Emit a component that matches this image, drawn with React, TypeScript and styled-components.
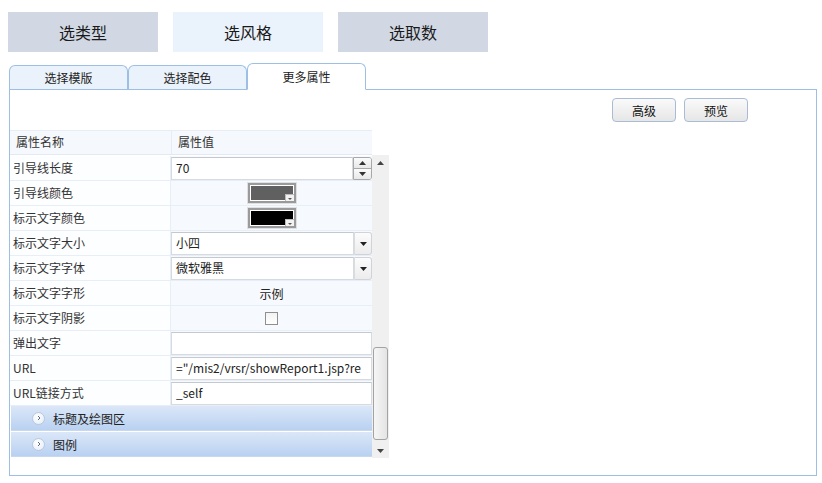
import styled, { createGlobalStyle } from 'styled-components';

const GlobalStyle = createGlobalStyle`
  body {
    margin: 0;
    background: #ffffff;
    font-family: "Noto Sans CJK SC", "Noto Sans", sans-serif;
    color: #222;
  }
`;

const Page = styled.div`
  width: 822px;
  height: 483px;
  overflow: hidden;
`;

const StepBar = styled.div`
  display: flex;
  gap: 15px;
  padding: 12px 8px 0;
`;

const StepButton = styled.div<{ active?: boolean }>`
  width: 150px;
  height: 40px;
  display: flex;
  align-items: center;
  justify-content: center;
  font-size: 16px;
  color: #1a1a1a;
  background: ${p => (p.active ? '#eaf2fb' : '#d1d8e4')};
`;

const TabStrip = styled.div`
  display: flex;
  align-items: flex-end;
  margin: 12px 0 0 9px;
  height: 25px;
`;

const Tab = styled.div<{ active?: boolean }>`
  width: 117px;
  height: ${p => (p.active ? '25px' : '23px')};
  display: flex;
  align-items: center;
  justify-content: center;
  font-size: 12px;
  color: #222;
  border: 1px solid #9dbfe6;
  border-bottom: ${p => (p.active ? '1px solid #fff' : 'none')};
  border-radius: 6px 6px 0 0;
  background: ${p => (p.active ? '#ffffff' : '#eaf2fb')};
  margin-bottom: ${p => (p.active ? '-1px' : '0')};
  position: relative;
  z-index: ${p => (p.active ? 2 : 1)};
`;

const Panel = styled.div`
  margin-left: 9px;
  width: 806px;
  height: 385px;
  border: 1px solid #9dbfe6;
  position: relative;
`;

const ActionRow = styled.div`
  display: flex;
  justify-content: flex-end;
  gap: 8px;
  padding: 8px 68px 0 0;
  height: 24px;
`;

const ActionButton = styled.div`
  width: 62px;
  height: 22px;
  border: 1px solid #a9bcd4;
  border-radius: 4px;
  background: linear-gradient(#fafafa, #e6e6e6);
  display: flex;
  align-items: center;
  justify-content: center;
  font-size: 12px;
  color: #111;
`;

const Grid = styled.div`
  margin-top: 8px;
  width: 379px;
`;

const HeaderRow = styled.div`
  display: grid;
  grid-template-columns: 161px 201px;
  height: 25px;
  background: #f5f8fc;
  border-top: 1px solid #e6edf6;
  border-bottom: 1px solid #e2e9f3;
  box-sizing: border-box;
  width: 362px;
`;

const HeaderCell = styled.div`
  display: flex;
  align-items: center;
  padding: 0 0 2px 6px;
  font-size: 12px;
  color: #333;
  & + & {
    border-left: 1px solid #e6edf6;
  }
`;

const Body = styled.div`
  display: flex;
  height: 303px;
`;

const Rows = styled.div`
  width: 362px;
  padding-top: 1px;
`;

const Row = styled.div`
  display: grid;
  grid-template-columns: 161px 201px;
  height: 25px;
  box-sizing: border-box;
  border-bottom: 1px solid #e8eef6;
`;

const NameCell = styled.div`
  display: flex;
  align-items: center;
  padding: 0 0 2px 3px;
  font-size: 12px;
  color: #333;
  background: #fdfeff;
  border-right: 1px solid #e8eef6;
`;

const ValueCell = styled.div<{ center?: boolean }>`
  display: flex;
  align-items: center;
  justify-content: ${p => (p.center ? 'center' : 'flex-start')};
  background: #f6f9fd;
  font-size: 12px;
  color: #222;
  position: relative;
`;

const TextField = styled.div`
  flex: 1;
  align-self: stretch;
  margin-top: 1px;
  background: #fff;
  border: 1px solid #d6dbe2;
  border-top-color: #c4c9d0;
  display: flex;
  align-items: center;
  padding: 0 0 2px 4px;
  font-size: 12px;
  color: #222;
  white-space: nowrap;
  overflow: hidden;
`;

const Spinner = styled.div`
  width: 17px;
  align-self: stretch;
  margin-top: 1px;
  display: flex;
  flex-direction: column;
  border: 1px solid #a8a8a8;
  border-radius: 0 3px 3px 0;
  overflow: hidden;
`;

const SpinPart = styled.div`
  flex: 1;
  display: flex;
  align-items: center;
  justify-content: center;
  background: linear-gradient(#fbfbfb, #e8e8e8);
  & + & {
    border-top: 1px solid #a8a8a8;
  }
`;

const DropButton = styled.div`
  width: 16px;
  align-self: stretch;
  margin-top: 1px;
  display: flex;
  align-items: center;
  justify-content: center;
  border: 1px solid #d0d4da;
  border-left: 1px solid #dcdcdc;
  border-radius: 0 3px 3px 0;
  background: linear-gradient(#fcfcfc, #ececec);
`;

const Swatch = styled.div<{ color: string }>`
  width: 44px;
  height: 16px;
  border: 2px solid #9a9a9a;
  outline: 1px solid #e0e0e0;
  box-shadow: inset 0 0 0 1px #fff;
  background: ${p => p.color};
  position: relative;
  &::after {
    content: '';
    position: absolute;
    right: 0;
    bottom: 0;
    width: 8px;
    height: 6px;
    background: #f2f2f2;
    border-top: 1px solid #bbb;
    border-left: 1px solid #bbb;
  }
  &::before {
    content: '';
    position: absolute;
    right: 2px;
    bottom: 1px;
    border-left: 2px solid transparent;
    border-right: 2px solid transparent;
    border-top: 2px solid #555;
    z-index: 1;
  }
`;

const CheckBox = styled.div`
  width: 11px;
  height: 11px;
  border: 1px solid #8f8f8f;
  background: linear-gradient(#f3f3f3, #ffffff);
`;

const Section = styled.div`
  height: 24px;
  margin: 0 0 1px 1px;
  display: flex;
  align-items: center;
  gap: 8px;
  padding-left: 21px;
  font-size: 12px;
  color: #222;
  background: linear-gradient(#dbe7f8, #b9d1f1);
  border-bottom: 1px solid #c8d9ef;
`;

const Bullet = styled.div`
  width: 11px;
  height: 11px;
  border-radius: 50%;
  background: radial-gradient(circle at 40% 35%, #ffffff, #e4ecf6);
  border: 1px solid #b8c8de;
  display: flex;
  align-items: center;
  justify-content: center;
`;

const ScrollBar = styled.div`
  width: 17px;
  background: #f0f0f0;
  display: flex;
  flex-direction: column;
  align-items: center;
`;

const ScrollArrow = styled.div`
  height: 15px;
  width: 17px;
  display: flex;
  align-items: center;
  justify-content: center;
`;

const ScrollTrack = styled.div`
  flex: 1;
  width: 100%;
  display: flex;
  flex-direction: column;
  justify-content: flex-end;
  padding-bottom: 3px;
`;

const ScrollThumb = styled.div`
  margin: 0 1px;
  height: 91px;
  border: 1px solid #a3a3a3;
  border-radius: 3px;
  background: linear-gradient(90deg, #f6f6f6, #e4e4e4);
`;

const Tri = ({ up, color = '#333' }: { up?: boolean; color?: string }) => (
  <svg width="7" height="4" viewBox="0 0 7 4">
    <path d={up ? 'M0 4 L3.5 0 L7 4 Z' : 'M0 0 L7 0 L3.5 4 Z'} fill={color} />
  </svg>
);

const Chevron = () => (
  <svg width="4" height="6" viewBox="0 0 4 6">
    <path d="M1 1 L3 3 L1 5" stroke="#5a6b86" strokeWidth="1" fill="none" />
  </svg>
);

export default function App() {
  return (
    <Page>
      <GlobalStyle />
      <StepBar>
        <StepButton>选类型</StepButton>
        <StepButton active>选风格</StepButton>
        <StepButton>选取数</StepButton>
      </StepBar>
      <TabStrip>
        <Tab>选择模版</Tab>
        <Tab>选择配色</Tab>
        <Tab active>更多属性</Tab>
      </TabStrip>
      <Panel>
        <ActionRow>
          <ActionButton>高级</ActionButton>
          <ActionButton>预览</ActionButton>
        </ActionRow>
        <Grid>
          <HeaderRow>
            <HeaderCell>属性名称</HeaderCell>
            <HeaderCell>属性值</HeaderCell>
          </HeaderRow>
          <Body>
            <Rows>
              <Row>
                <NameCell>引导线长度</NameCell>
                <ValueCell>
                  <TextField>70</TextField>
                  <Spinner>
                    <SpinPart><Tri up /></SpinPart>
                    <SpinPart><Tri /></SpinPart>
                  </Spinner>
                </ValueCell>
              </Row>
              <Row>
                <NameCell>引导线颜色</NameCell>
                <ValueCell center>
                  <Swatch color="#606060" />
                </ValueCell>
              </Row>
              <Row>
                <NameCell>标示文字颜色</NameCell>
                <ValueCell center>
                  <Swatch color="#000000" />
                </ValueCell>
              </Row>
              <Row>
                <NameCell>标示文字大小</NameCell>
                <ValueCell>
                  <TextField>小四</TextField>
                  <DropButton><Tri color="#222" /></DropButton>
                </ValueCell>
              </Row>
              <Row>
                <NameCell>标示文字字体</NameCell>
                <ValueCell>
                  <TextField>微软雅黑</TextField>
                  <DropButton><Tri color="#222" /></DropButton>
                </ValueCell>
              </Row>
              <Row>
                <NameCell>标示文字字形</NameCell>
                <ValueCell center>示例</ValueCell>
              </Row>
              <Row>
                <NameCell>标示文字阴影</NameCell>
                <ValueCell center>
                  <CheckBox />
                </ValueCell>
              </Row>
              <Row>
                <NameCell>弹出文字</NameCell>
                <ValueCell>
                  <TextField />
                </ValueCell>
              </Row>
              <Row>
                <NameCell>URL</NameCell>
                <ValueCell>
                  <TextField>="/mis2/vrsr/showReport1.jsp?re</TextField>
                </ValueCell>
              </Row>
              <Row>
                <NameCell>URL链接方式</NameCell>
                <ValueCell>
                  <TextField>_self</TextField>
                </ValueCell>
              </Row>
              <Section>
                <Bullet><Chevron /></Bullet>
                标题及绘图区
              </Section>
              <Section>
                <Bullet><Chevron /></Bullet>
                图例
              </Section>
            </Rows>
            <ScrollBar>
              <ScrollArrow><Tri up color="#444" /></ScrollArrow>
              <ScrollTrack>
                <ScrollThumb />
              </ScrollTrack>
              <ScrollArrow><Tri color="#444" /></ScrollArrow>
            </ScrollBar>
          </Body>
        </Grid>
      </Panel>
    </Page>
  );
}
